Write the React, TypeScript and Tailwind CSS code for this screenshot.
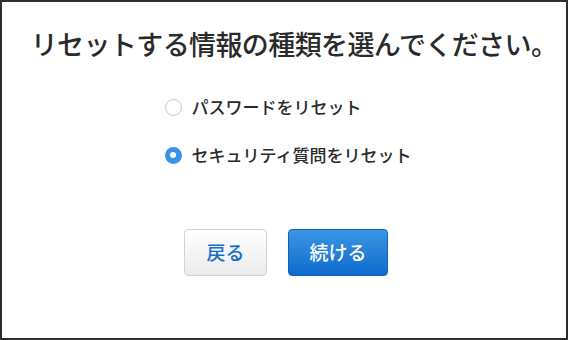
export default function App() {
  return (
    <div
      className="w-[568px] h-[340px] bg-white border-2 border-[#2e2e2e] flex flex-col items-center"
      style={{ fontFamily: '"Noto Sans CJK JP", "Noto Sans", sans-serif' }}
    >
      <h1 className="mt-[24px] ml-[20px] text-[27px] leading-[36px] text-[#2a2a2a] font-medium tracking-[-0.6px]">
        リセットする情報の種類を選んでください。
      </h1>

      <div className="mt-[33px] flex flex-col gap-[24px] ml-[8px]">
        <label className="flex items-center h-[24px] gap-[10px] text-[17px] text-[#2a2a2a] font-medium">
          <span className="w-[17px] h-[17px] rounded-full border border-[#c8c8c8] bg-white" />
          <span>パスワードをリセット</span>
        </label>
        <label className="flex items-center h-[24px] gap-[10px] text-[17px] text-[#2a2a2a] font-medium">
          <span className="w-[17px] h-[17px] rounded-full bg-[#3a92ea] flex items-center justify-center">
            <span className="w-[6px] h-[6px] rounded-full bg-white" />
          </span>
          <span>セキュリティ質問をリセット</span>
        </label>
      </div>

      <div className="mt-[62px] flex gap-[21px] ml-[4px]">
        <button className="w-[83px] h-[47px] rounded-[4px] border border-[#d2d2d2] bg-gradient-to-b from-[#ffffff] to-[#ebebeb] text-[#1470cc] text-[19px] font-medium">
          戻る
        </button>
        <button className="w-[100px] h-[47px] rounded-[4px] border border-[#0f62b8] bg-gradient-to-b from-[#3b95e2] to-[#0c6bcf] text-white text-[19px] font-medium">
          続ける
        </button>
      </div>
    </div>
  );
}
